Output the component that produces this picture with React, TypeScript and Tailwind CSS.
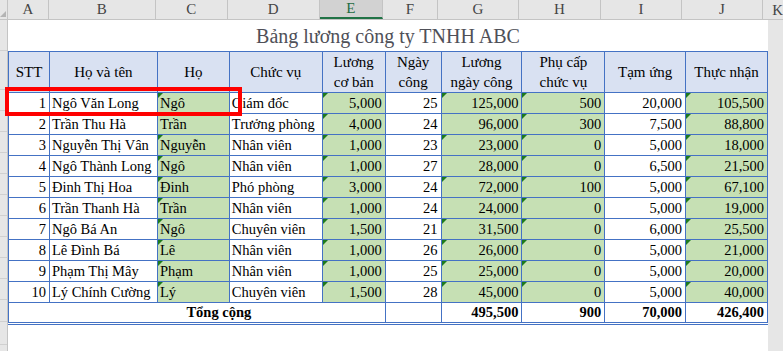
import React from "react";

const colWidths = [41, 108, 72, 93, 63, 56, 81, 83, 81, 82];
const colLetters = ["A", "B", "C", "D", "E", "F", "G", "H", "I", "J"];
const greenCols = [2, 4, 6, 7, 9];

type Row = [number, string, string, string, string, string, string, string, string, string];

const rows: Row[] = [
  [1, "Ngô Văn Long", "Ngô", "Giám đốc", "5,000", "25", "125,000", "500", "20,000", "105,500"],
  [2, "Trần Thu Hà", "Trần", "Trưởng phòng", "4,000", "24", "96,000", "300", "7,500", "88,800"],
  [3, "Nguyễn Thị Vân", "Nguyễn", "Nhân viên", "1,000", "23", "23,000", "0", "5,000", "18,000"],
  [4, "Ngô Thành Long", "Ngô", "Nhân viên", "1,000", "27", "28,000", "0", "6,500", "21,500"],
  [5, "Đinh Thị Hoa", "Đinh", "Phó phòng", "3,000", "24", "72,000", "100", "5,000", "67,100"],
  [6, "Trần Thanh Hà", "Trần", "Nhân viên", "1,000", "24", "24,000", "0", "5,000", "19,000"],
  [7, "Ngô Bá An", "Ngô", "Chuyên viên", "1,500", "21", "31,500", "0", "6,000", "25,500"],
  [8, "Lê Đình Bá", "Lê", "Nhân viên", "1,000", "26", "26,000", "0", "5,000", "21,000"],
  [9, "Phạm Thị Mây", "Phạm", "Nhân viên", "1,000", "25", "25,000", "0", "5,000", "20,000"],
  [10, "Lý Chính Cường", "Lý", "Chuyên viên", "1,500", "28", "45,000", "0", "5,000", "40,000"],
];

// green cells without the little error triangle
const noTriangle: Record<number, number[]> = {
  1: [2, 6],
  3: [6],
  5: [6],
};

// row header heights (Excel rows 1..15)
const rowHeaderHeights = [31, 39, 21, 21, 21, 21, 21, 21, 21, 21, 21, 21, 22, 23, 23];

function Triangle() {
  return (
    <span className="absolute left-0 top-0 h-0 w-0 border-t-[5px] border-r-[5px] border-t-[#1d7a1d] border-r-transparent" />
  );
}

export default function App() {
  return (
    <div className="w-[783px] h-[351px] overflow-hidden bg-white font-['Liberation_Serif',serif] text-black">
      {/* Column headers */}
      <div className="flex h-[20px] bg-[#e6e6e6] border-b border-[#c4c4c4]">
        <div className="w-[8px] border-r border-[#c4c4c4] relative">
          <span className="absolute right-[1px] bottom-[2px] h-0 w-0 border-b-[6px] border-l-[6px] border-b-[#b4b4b4] border-l-transparent" />
        </div>
        {colLetters.map((l, i) => (
          <div
            key={l}
            style={{ width: colWidths[i] }}
            className={
              "flex items-center justify-center text-[15px] border-r border-[#c4c4c4] " +
              (l === "E" ? "bg-[#d2d2d2] text-[#1e6b41] border-b-2 border-b-[#217346]" : "text-[#444]")
            }
          >
            {l}
          </div>
        ))}
        <div className="flex-1 pl-[9px] text-[15px] text-[#444] leading-[20px]">K</div>
      </div>

      <div className="flex h-[331px]">
        {/* Row headers, clipped to a sliver */}
        <div className="w-[8px] bg-[#e6e6e6] border-r border-[#c4c4c4]">
          {rowHeaderHeights.map((h, i) => (
            <div key={i} style={{ height: h }} className="border-b border-[#d0d0d0]" />
          ))}
        </div>

        {/* Sheet */}
        <div className="relative w-[760px] bg-white">
          <div className="h-[31px] flex items-center justify-center text-[20px] text-[#4f5058]">
            Bảng lương công ty TNHH ABC
          </div>

          <table className="table-fixed border-collapse text-[14.5px]">
            <colgroup>
              {colWidths.map((w, i) => (
                <col key={i} style={{ width: w }} />
              ))}
            </colgroup>
            <thead>
              <tr className="h-[39px] bg-[#d9e1f2] leading-[20px] text-[15px]">
                {["STT", "Họ và tên", "Họ", "Chức vụ", "Lương\ncơ bản", "Ngày\ncông", "Lương\nngày công", "Phụ cấp\nchức vụ", "Tạm ứng", "Thực nhận"].map(
                  (h) => (
                    <th key={h} className="border border-[#4472c4] p-0 font-normal text-center whitespace-pre-line">
                      {h}
                    </th>
                  )
                )}
              </tr>
            </thead>
            <tbody>
              {rows.map((r, ri) => (
                <tr key={ri} className="h-[21px] leading-[19px]">
                  {r.map((v, ci) => {
                    const green = greenCols.includes(ci);
                    const numeric = ci === 0 || ci >= 4;
                    const tri = green && !(noTriangle[ri] || []).includes(ci);
                    return (
                      <td
                        key={ci}
                        className={
                          "relative border border-[#4472c4] p-0 align-bottom whitespace-nowrap overflow-hidden " +
                          (green ? "bg-[#c6e0b4] " : "") +
                          (numeric ? "text-right pr-[3px]" : "text-left pl-[2px]")
                        }
                      >
                        {tri && <Triangle />}
                        {v}
                      </td>
                    );
                  })}
                </tr>
              ))}
              <tr className="h-[21px] leading-[19px] font-bold border-b-[3px] border-double border-[#4472c4]">
                <td colSpan={5} className="border-t border-r border-l border-[#4472c4] p-0 pl-[44px] text-center align-bottom">
                  Tổng cộng
                </td>
                <td className="border border-[#4472c4] p-0" />
                <td className="border border-[#4472c4] p-0 text-right pr-[3px] align-bottom">495,500</td>
                <td className="border border-[#4472c4] p-0 text-right pr-[3px] align-bottom">900</td>
                <td className="border border-[#4472c4] p-0 text-right pr-[3px] align-bottom">70,000</td>
                <td className="border border-[#4472c4] p-0 text-right pr-[3px] align-bottom">426,400</td>
              </tr>
            </tbody>
          </table>

          {/* Red highlight box */}
          <div className="absolute left-[-3px] top-[67px] w-[237px] h-[29px] border-[4px] border-[#ff0000] pointer-events-none" />
        </div>

        <div className="flex-1 bg-[#e6e6e6]" />
      </div>
    </div>
  );
}
